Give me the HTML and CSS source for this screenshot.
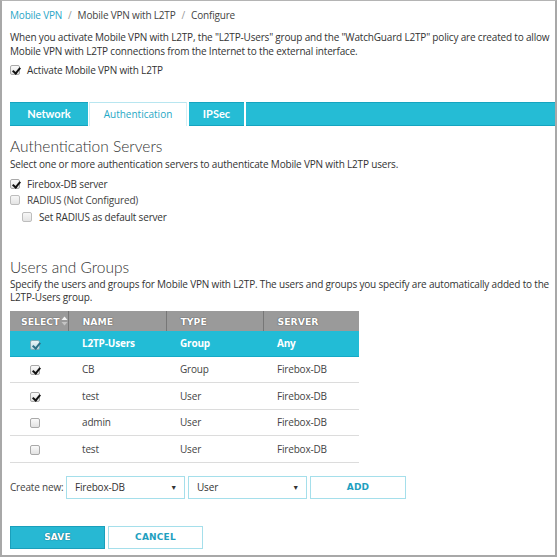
FILE: index.html
```html
<!DOCTYPE html>
<html>
<head>
<meta charset="utf-8">
<link rel="stylesheet" href="styles.css">
</head>
<body>
<div class="frame">
  <div class="crumbs"><span class="crumb-link">Mobile VPN</span><span class="sep">/</span>Mobile VPN with L2TP<span class="sep">/</span>Configure</div>
  <p class="intro">When you activate Mobile VPN with L2TP, the "L2TP-Users" group and the "WatchGuard L2TP" policy are created to allow Mobile VPN with L2TP connections from the Internet to the external interface.</p>
  <label class="check-row activate"><span class="cb on"></span>Activate Mobile VPN with L2TP</label>

  <div class="tabs">
    <div class="tab tab-net">Network</div>
    <div class="tab active tab-auth">Authentication</div>
    <div class="tab tab-ipsec">IPSec</div>
    <div class="tab filler"></div>
  </div>

  <h2 class="heading h-auth">Authentication Servers</h2>
  <p class="desc">Select one or more authentication servers to authenticate Mobile VPN with L2TP users.</p>
  <label class="check-row r1"><span class="cb on"></span>Firebox-DB server</label>
  <label class="check-row r2"><span class="cb"></span>RADIUS (Not Configured)</label>
  <label class="check-row r3 indent"><span class="cb"></span>Set RADIUS as default server</label>

  <h2 class="heading h-users">Users and Groups</h2>
  <p class="desc2">Specify the users and groups for Mobile VPN with L2TP. The users and groups you specify are automatically added to the L2TP-Users group.</p>

  <table class="grid">
    <thead>
      <tr>
        <th class="c-sel">SELECT<svg class="sort" width="7" height="10" viewBox="0 0 7 10"><path d="M3.5 0.5 L6.5 4 L0.5 4 Z" fill="#f4f4f4"/><path d="M3.5 9.5 L6.5 6 L0.5 6 Z" fill="#c4c4c4"/></svg></th>
        <th class="c-name">NAME</th>
        <th class="c-type">TYPE</th>
        <th class="c-srv">SERVER</th>
      </tr>
    </thead>
    <tbody>
      <tr class="sel"><td class="c-sel"><span class="cb on"></span></td><td>L2TP-Users</td><td>Group</td><td>Any</td></tr>
      <tr class="h26"><td class="c-sel"><span class="cb on"></span></td><td>CB</td><td>Group</td><td>Firebox-DB</td></tr>
      <tr class="h27"><td class="c-sel"><span class="cb on"></span></td><td>test</td><td>User</td><td>Firebox-DB</td></tr>
      <tr class="h26"><td class="c-sel"><span class="cb"></span></td><td>admin</td><td>User</td><td>Firebox-DB</td></tr>
      <tr class="h27"><td class="c-sel"><span class="cb"></span></td><td>test</td><td>User</td><td>Firebox-DB</td></tr>
    </tbody>
  </table>

  <div class="create">
    <span class="create-label">Create new:</span>
    <div class="select s1"><span>Firebox-DB</span><span class="caret">▼</span></div>
    <div class="select s2"><span>User</span><span class="caret">▼</span></div>
    <div class="btn btn-add">ADD</div>
  </div>

  <div class="actions">
    <div class="btn btn-save">SAVE</div>
    <div class="btn btn-cancel">CANCEL</div>
  </div>
</div>
</body>
</html>
```

FILE: styles.css
```css
* { box-sizing: border-box; }
html, body { margin: 0; padding: 0; background: #fff; }
body {
  font-family: "Open Sans", "Liberation Sans", sans-serif;
  font-size: 10px;
  letter-spacing: -0.18px;
  color: #333;
}
.frame {
  width: 557px;
  height: 557px;
  border: 1px solid #b4b4b4;
  border-left: 2px solid #a8a8a8;
  border-right: 2px solid #a8a8a8;
  border-bottom: 2px solid #a8a8a8;
  padding: 7px 4px 0 8px;
}
.crumbs {
  line-height: 14px;
  height: 14px;
  color: #444;
}
.crumb-link { color: #2aa5c6; }
.sep { color: #999; margin: 0 6px 0 6px; }
.intro {
  margin: 8px 0 0 0;
  line-height: 14px;
  color: #333;
}
.check-row {
  display: flex;
  align-items: center;
  line-height: 14px;
  height: 14px;
  color: #333;
}
.activate { margin-top: 5px; }
.cb {
  display: inline-block;
  width: 10px;
  height: 10px;
  border: 1px solid #a9a9a9;
  border-radius: 2px;
  background: linear-gradient(#fafafa, #e2e2e2);
  margin-right: 7px;
  position: relative;
  flex: none;
}
.cb.on::after {
  content: "";
  position: absolute;
  left: 3px;
  top: 0px;
  width: 3px;
  height: 6px;
  border-right: 2px solid #111;
  border-bottom: 2px solid #111;
  transform: rotate(40deg);
}
.tabs {
  display: flex;
  margin-top: 25px;
  margin-right: -4px;
  height: 24px;
  gap: 1px;
}
.tab {
  height: 24px;
  line-height: 22px;
  text-align: center;
  background: #25bcd5;
  color: #fff;
  font-family: "Lato", "Open Sans", sans-serif;
  font-weight: 700;
  font-size: 11px;
  letter-spacing: 0;
  border-top: 1px solid #15a4c0;
  border-bottom: 1px solid #15a4c0;
}
.tab-net { width: 78px; }
.tab-auth { width: 98px; }
.tab-ipsec { width: 55px; margin-left: 1px; }
.tab.filler { flex: 1; margin-left: 1px; }
.tab.active {
  background: #fff;
  color: #1fa8c6;
  font-weight: 400;
  font-family: "Open Sans", sans-serif;
  font-size: 10px;
  border-top: 1px solid #b8e6f0;
  border-bottom: none;
  border-left: 1px solid #d5eff5;
  border-right: 1px solid #d5eff5;
}
.heading {
  margin: 0;
  font-family: "Lato", "Open Sans", sans-serif;
  font-weight: 300;
  font-size: 15.5px;
  letter-spacing: 0;
  line-height: 20px;
  color: #333;
}
.h-auth { margin-top: 10px; }
.desc { margin: 1px 0 0 0; line-height: 14px; }
.r1 { margin-top: 6px; }
.r2 { margin-top: 2px; color: #444; }
.r3 { margin-top: 3px; }
.r2 .cb, .r3 .cb { background: linear-gradient(#f7f7f7, #e4e4e4); border-color: #bdbdbd; }
.indent { padding-left: 12px; }
.h-users { margin-top: 33px; }
.desc2 { margin: 1px 0 0 0; line-height: 13px; }
.grid {
  margin-top: 7px;
  width: 349px;
  border-collapse: collapse;
  table-layout: fixed;
}
.grid th {
  height: 20px;
  background: #9a9a9a;
  color: #fff;
  font-family: "DejaVu Sans", Verdana, sans-serif;
  font-weight: 700;
  font-size: 9.3px;
  letter-spacing: 0;
  text-align: left;
  padding: 0 0 0 14px;
  text-shadow: 0 0 1px #555, 0 0 1px #555;
  border-left: 1px solid #ececec;
  border-right: 1px solid #777;
}
.grid th:first-child { border-left: none; }
.grid th:last-child { border-right: none; }
.grid th.c-sel { width: 58px; padding-left: 11px; }
.grid th.c-name { width: 98px; }
.grid th.c-type { width: 97px; }
.sort { vertical-align: -1px; margin-left: 1px; }
.grid td {
  padding: 0 0 0 14px;
  font-size: 10px;
  color: #444;
  border-bottom: 1px solid #dcdcdc;
}
.grid td.c-sel { padding: 0 0 0 20px; }
.grid td.c-sel .cb { vertical-align: middle; margin: 0; }
.grid tr.sel td {
  height: 25px;
  background: #22bcd6;
  color: #fff;
  font-weight: 700;
  border-bottom: 1px solid #15a9c6;
}
.grid tr.sel .cb { background: linear-gradient(#e8f4f7, #bfdbe3); border-color: #7eaab6; }
.grid tr.sel .cb.on::after { border-color: #2a6f86; }
.grid tr.h26 td { height: 26px; }
.grid tr.h27 td { height: 27px; }
.create {
  display: flex;
  align-items: center;
  margin-top: 13px;
  height: 23px;
}
.create-label { color: #444; width: 56px; }
.select {
  width: 119px;
  height: 23px;
  border: 1px solid #a5dfeb;
  display: flex;
  align-items: center;
  justify-content: space-between;
  padding: 0 7px 0 8px;
  margin-right: 3px;
  color: #333;
}
.caret { font-size: 7px; color: #333; }
.btn {
  height: 23px;
  width: 96px;
  display: flex;
  align-items: center;
  justify-content: center;
  font-family: "DejaVu Sans", Verdana, sans-serif;
  font-weight: 700;
  font-size: 9px;
  letter-spacing: 0.2px;
}
.btn-add, .btn-cancel {
  background: #fff;
  border: 1px solid #a5dfeb;
  color: #1e9fc0;
}
.actions {
  display: flex;
  gap: 3px;
  margin-top: 27px;
}
.btn-save {
  width: 95px;
  background: #27b8d3;
  border: 1px solid #1a9fbb;
  color: #fff;
  text-shadow: 0 0 1px #1a6d82, 0 0 1px #1a6d82;
}
.btn-cancel { width: 95px; }
```
